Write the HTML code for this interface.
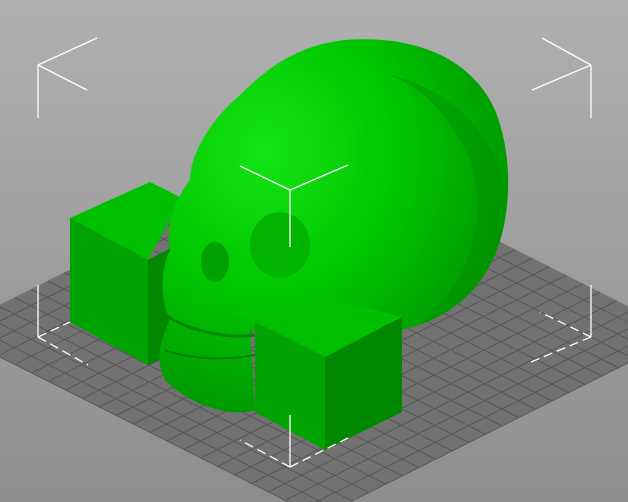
<!DOCTYPE html>
<html><head><style>
html,body{margin:0;padding:0;width:628px;height:502px;overflow:hidden;background:#a0a0a0}
</style></head><body>
<svg width="628" height="502" viewBox="0 0 628 502" xmlns="http://www.w3.org/2000/svg">
<defs>
<linearGradient id="bg" x1="0" y1="0" x2="0" y2="1">
<stop offset="0" stop-color="#b0b0b0"/><stop offset="1" stop-color="#8e8e8e"/></linearGradient>
<pattern id="grid" width="20" height="20" patternUnits="userSpaceOnUse">
<rect width="20" height="20" fill="#727272"/>
<path d="M0 0H20M0 0V20" stroke="#555" stroke-width="2.6"/></pattern>
<radialGradient id="sk" cx="0.3" cy="0.3" r="0.85">
<stop offset="0" stop-color="#14e414"/><stop offset="0.45" stop-color="#00c600"/><stop offset="1" stop-color="#008600"/></radialGradient>
</defs>
<rect width="628" height="502" fill="url(#bg)"/>
<g transform="matrix(-0.845,-0.425,0.832,-0.416,319,518)">
<rect x="0" y="0" width="440" height="440" fill="url(#grid)"/>
</g>
<polygon points="70,218 150,182 182,198 148,260" fill="#00bf00"/>
<polygon points="70,218 148,260 148,365 70,322" fill="#00a300"/>
<polygon points="148,260 182,242 182,350 148,365" fill="#008800"/>
<path d="M345,40 C410,35 470,55 495,110 C515,160 510,220 495,255 C480,290 450,320 400,330 L330,340 L250,330 L255,410 C230,418 190,405 165,380 C155,360 160,340 170,320 C160,300 160,270 170,250 C165,225 175,200 190,180 C190,155 210,120 240,95 C270,65 300,45 345,40 Z" fill="url(#sk)"/>
<path d="M390,75 C455,90 500,140 505,200 C505,250 480,300 420,325 C470,280 490,220 470,160 C450,115 425,90 390,75Z" fill="#008f00" opacity="0.5"/>
<ellipse cx="280" cy="245" rx="30" ry="33" fill="#00b400"/>
<ellipse cx="215" cy="262" rx="14" ry="20" fill="#00a000"/>
<path d="M160,310 C180,330 230,340 255,335" stroke="#008800" stroke-width="3" fill="none"/>
<path d="M165,350 C190,360 230,360 255,355" stroke="#007f00" stroke-width="2" fill="none"/>
<polygon points="255,322 335,300 402,317 325,357" fill="#00bf00"/>
<polygon points="255,322 325,357 325,450 255,412" fill="#00a300"/>
<polygon points="325,357 402,317 402,412 325,450" fill="#008800"/>
<g stroke="#fff" stroke-width="1.3" fill="none">
<path d="M38,65 L97,38 M38,65 L38,118 M38,65 L87,90"/>
<path d="M591,65 L542,38 M591,65 L591,118 M591,65 L532,90"/>
<path d="M290,190 L240,166 M290,190 L348,165 M290,190 L290,247"/>
<path d="M38,285 L38,337"/>
<path d="M591,285 L591,337"/>
<path d="M290,415 L290,467"/>
</g>
<g stroke="#fff" stroke-width="1.3" fill="none" stroke-dasharray="9,5">
<path d="M38,337 L70,322 M38,337 L88,365"/>
<path d="M591,337 L540,312 M591,337 L531,362"/>
<path d="M290,467 L240,440 M290,467 L348,438"/>
</g>
</svg>
</body></html>
